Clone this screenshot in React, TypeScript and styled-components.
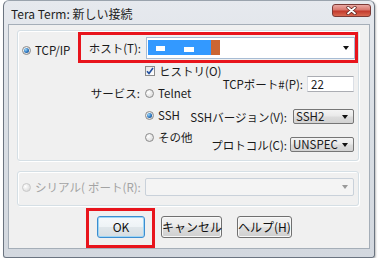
import React from "react";
import styled, { createGlobalStyle } from "styled-components";

const GlobalStyle = createGlobalStyle`
  body {
    margin: 0;
    background: #ffffff;
    font-family: "Noto Sans CJK JP", "Noto Sans", sans-serif;
    color: #1a1a1a;
  }
`;

const Window = styled.div`
  box-sizing: border-box;
  width: 372px;
  height: 258px;
  margin-left: 3px;
  border: 1px solid #6b7480;
  border-top-color: #9aa3ad;
  border-radius: 6px 6px 3px 3px;
  background: linear-gradient(180deg, #e6e9ee 0%, #dadfe5 45%, #d3d8df 100%);
  padding: 0 4px 8px;
  box-shadow: 1px 1px 2px rgba(0, 0, 0, 0.25);
`;

const TitleBar = styled.div`
  display: flex;
  align-items: flex-start;
  height: 23px;
  margin: 0 -4px;
  padding: 0 3px 0 7px;
`;

const TitleText = styled.span`
  margin-top: 5px;
  font-size: 12px;
  line-height: 15px;
  color: #1e1e1e;
  white-space: nowrap;
`;

const CloseButton = styled.div`
  box-sizing: border-box;
  display: flex;
  align-items: center;
  justify-content: center;
  width: 39px;
  height: 13px;
  margin: 3px 0 0 auto;
  border: 1px solid #7c3a36;
  border-radius: 3px;
  background: linear-gradient(180deg, #eaa9a3 0%, #d9776d 45%, #c2392c 55%, #d86a52 100%);
`;

const Client = styled.div`
  box-sizing: border-box;
  display: flex;
  flex-direction: column;
  height: 225px;
  border: 1px solid #a5aeb8;
  background: #f0f0f0;
  padding: 5px 10px 0 8px;
  font-size: 11.5px;
  line-height: 14px;
`;

const Group = styled.div<{ $h: number; $mt?: number }>`
  box-sizing: border-box;
  height: ${({ $h }) => $h}px;
  margin-top: ${({ $mt = 0 }) => $mt}px;
  border: 1px solid #d5dfe5;
  border-radius: 3px;
  box-shadow: inset 1px 1px 0 #ffffff, 1px 1px 0 #ffffff;
  display: flex;
  flex-direction: column;
`;

const HostRow = styled.div`
  display: flex;
  align-items: flex-start;
  margin-top: 1px;
`;

const SideOption = styled.label<{ $w: number; $mt?: number }>`
  display: flex;
  align-items: center;
  gap: 4px;
  flex-shrink: 0;
  width: ${({ $w }) => $w}px;
  margin-top: ${({ $mt = 0 }) => $mt}px;
  padding-left: 4px;
  box-sizing: border-box;
  white-space: nowrap;
`;

const ClippedText = styled.span`
  display: block;
  width: 51px;
  overflow: hidden;
  white-space: nowrap;
  color: #a3a3a3;
`;

const HighlightFrame = styled.div`
  box-sizing: border-box;
  display: flex;
  align-items: center;
  gap: 5px;
  width: 281px;
  height: 31px;
  border: 3px solid #e8141c;
`;

const FieldLabel = styled.span<{ $w?: number; $disabled?: boolean; $ml?: number }>`
  ${({ $w }) => ($w ? `width: ${$w}px;` : "")}
  margin-left: ${({ $ml = 0 }) => $ml}px;
  text-align: right;
  white-space: nowrap;
  color: ${({ $disabled }) => ($disabled ? "#a3a3a3" : "#1a1a1a")};
`;

const HostCombo = styled.div`
  box-sizing: border-box;
  display: flex;
  align-items: center;
  width: 209px;
  height: 22px;
  padding: 0 5px 0 1px;
  border: 1px solid #a7bcd4;
  background: #ffffff;
`;

const Selection = styled.div`
  display: flex;
  align-items: center;
  height: 15px;
  width: 63px;
  background: #3399ff;
`;

const Redact = styled.span<{ $w: number; $ml: number; $dy: number }>`
  width: ${({ $w }) => $w}px;
  height: 5px;
  margin-left: ${({ $ml }) => $ml}px;
  margin-top: ${({ $dy }) => $dy}px;
  background: #ffffff;
`;

const CaretBlock = styled.div`
  width: 9px;
  height: 15px;
  background: #cc6633;
`;

const Arrow = styled.span<{ $disabled?: boolean }>`
  margin-left: auto;
  width: 0;
  height: 0;
  border-left: 3.5px solid transparent;
  border-right: 3.5px solid transparent;
  border-top: 4px solid ${({ $disabled }) => ($disabled ? "#9a9a9a" : "#111111")};
`;

const OptionsArea = styled.div`
  display: flex;
  margin-top: -3px;
  padding: 0 4px 0 62px;
`;

const LeftGrid = styled.div`
  display: grid;
  flex-shrink: 0;
  grid-template-columns: 60px 45px;
  grid-auto-rows: 22px;
  column-gap: 5px;
  align-items: center;
`;

const Option = styled.label`
  display: flex;
  align-items: center;
  gap: 4px;
  white-space: nowrap;
`;

const Radio = styled.span<{ $checked?: boolean; $disabled?: boolean }>`
  position: relative;
  box-sizing: border-box;
  flex-shrink: 0;
  width: 9px;
  height: 9px;
  border-radius: 50%;
  border: 1px solid ${({ $disabled }) => ($disabled ? "#c9c9c9" : "#8b8b8b")};
  background: radial-gradient(circle at 35% 35%, #ffffff 0%, #e4e4e4 60%, #cfcfcf 100%);

  &::after {
    content: "";
    display: ${({ $checked }) => ($checked ? "block" : "none")};
    position: absolute;
    inset: 1px;
    border-radius: 50%;
    background: radial-gradient(circle at 35% 35%, #9fd8f7 0%, #2a75c0 55%, #16407a 100%);
  }
`;

const CheckBox = styled.span`
  box-sizing: border-box;
  display: flex;
  align-items: center;
  justify-content: center;
  flex-shrink: 0;
  width: 10px;
  height: 10px;
  border: 1px solid #8b8b8b;
  background: linear-gradient(135deg, #e6e6e6, #ffffff);
`;

const RightCol = styled.div`
  display: flex;
  flex-direction: column;
  align-items: flex-end;
  margin-left: auto;
  padding-top: 16px;
`;

const FieldRow = styled.div<{ $gap: number; $mt?: number }>`
  display: flex;
  align-items: center;
  gap: ${({ $gap }) => $gap}px;
  margin-top: ${({ $mt = 0 }) => $mt}px;
`;

const PortInput = styled.div`
  box-sizing: border-box;
  width: 47px;
  height: 16px;
  padding-left: 3px;
  border: 1px solid #abadb3;
  border-left-color: #dbdfe6;
  border-right-color: #dbdfe6;
  background: #ffffff;
  line-height: 14px;
`;

const ButtonCombo = styled.div<{ $w: number }>`
  box-sizing: border-box;
  display: flex;
  align-items: center;
  width: ${({ $w }) => $w}px;
  height: 15px;
  padding: 0 5px 0 2px;
  border: 1px solid #767676;
  border-radius: 2px;
  background: linear-gradient(180deg, #f4f4f4 0%, #e9e9e9 48%, #dcdcdc 52%, #d2d2d2 100%);
  line-height: 13px;
  white-space: nowrap;
`;

const SerialRow = styled.div`
  display: flex;
  align-items: center;
  height: 100%;
  padding: 0 4px 2px 0;
  box-sizing: border-box;
`;

const DisabledCombo = styled.div`
  box-sizing: border-box;
  display: flex;
  align-items: center;
  width: 209px;
  height: 18px;
  margin-left: auto;
  padding-right: 5px;
  border: 1px solid #c9d1da;
  border-radius: 2px;
  background: #f4f4f4;
`;

const ButtonRow = styled.div`
  display: flex;
  align-items: flex-start;
  margin-top: 2px;
  padding-left: 69px;
`;

const OkFrame = styled.div`
  box-sizing: border-box;
  width: 69px;
  height: 40px;
  padding: 5px 0 0 8px;
  border: 3px solid #e8141c;
`;

const Button = styled.button<{ $w: number; $primary?: boolean; $ml?: number; $mt?: number }>`
  box-sizing: border-box;
  width: ${({ $w }) => $w}px;
  height: 22px;
  margin: ${({ $mt = 0 }) => $mt}px 0 0 ${({ $ml = 0 }) => $ml}px;
  padding: 0;
  font-family: inherit;
  font-size: 12px;
  line-height: 14px;
  color: #111111;
  border: 1px solid ${({ $primary }) => ($primary ? "#3c8dd0" : "#707070")};
  border-radius: 3px;
  background: ${({ $primary }) =>
    $primary
      ? "linear-gradient(180deg, #f6f9fb 0%, #eef3f6 48%, #dfe6ea 52%, #d6dde2 100%)"
      : "linear-gradient(180deg, #f2f2f2 0%, #ebebeb 48%, #dddddd 52%, #cfcfcf 100%)"};
  box-shadow: ${({ $primary }) => ($primary ? "inset 0 0 0 1px #9fd6f5" : "inset 0 0 0 1px #f8f8f8")};
  white-space: nowrap;
`;

const CloseGlyph = () => (
  <svg width="11" height="9" viewBox="0 0 11 9">
    <path d="M2 1.5 L9 7.5 M9 1.5 L2 7.5" stroke="#5a1f1b" strokeWidth="3.2" strokeLinecap="round" />
    <path d="M2 1.5 L9 7.5 M9 1.5 L2 7.5" stroke="#ffffff" strokeWidth="1.8" strokeLinecap="round" />
  </svg>
);

const CheckMark = () => (
  <svg width="8" height="8" viewBox="0 0 8 8">
    <path d="M1 4.2 L3 6.5 L7 1" fill="none" stroke="#1f4fa0" strokeWidth="1.6" />
  </svg>
);

export default function App() {
  return (
    <>
      <GlobalStyle />
      <Window>
        <TitleBar>
          <TitleText>Tera Term: 新しい接続</TitleText>
          <CloseButton>
            <CloseGlyph />
          </CloseButton>
        </TitleBar>
        <Client>
          <Group $h={134}>
            <HostRow>
              <SideOption $w={60} $mt={11}>
                <Radio $checked />
                <span>TCP/IP</span>
              </SideOption>
              <HighlightFrame>
                <FieldLabel $w={60}>ホスト(T):</FieldLabel>
                <HostCombo>
                  <Selection>
                    <Redact $w={9} $ml={8} $dy={2} />
                    <Redact $w={10} $ml={19} $dy={4} />
                  </Selection>
                  <CaretBlock />
                  <Arrow />
                </HostCombo>
              </HighlightFrame>
            </HostRow>
            <OptionsArea>
              <LeftGrid>
                <span />
                <Option>
                  <CheckBox>
                    <CheckMark />
                  </CheckBox>
                  <span>ヒストリ(O)</span>
                </Option>
                <FieldLabel>サービス:</FieldLabel>
                <Option>
                  <Radio />
                  <span>Telnet</span>
                </Option>
                <span />
                <Option>
                  <Radio $checked />
                  <span>SSH</span>
                </Option>
                <span />
                <Option>
                  <Radio />
                  <span>その他</span>
                </Option>
              </LeftGrid>
              <RightCol>
                <FieldRow $gap={4}>
                  <FieldLabel>TCPポート#(P):</FieldLabel>
                  <PortInput>22</PortInput>
                </FieldRow>
                <FieldRow $gap={6} $mt={17}>
                  <FieldLabel>SSHバージョン(V):</FieldLabel>
                  <ButtonCombo $w={61}>
                    SSH2
                    <Arrow />
                  </ButtonCombo>
                </FieldRow>
                <FieldRow $gap={3} $mt={13}>
                  <FieldLabel>プロトコル(C):</FieldLabel>
                  <ButtonCombo $w={64}>
                    UNSPEC
                    <Arrow />
                  </ButtonCombo>
                </FieldRow>
              </RightCol>
            </OptionsArea>
          </Group>
          <Group $h={36} $mt={10}>
            <SerialRow>
              <SideOption $w={67}>
                <Radio $disabled />
                <ClippedText>シリアル(E)</ClippedText>
              </SideOption>
              <FieldLabel $disabled $ml={3}>
                ポート(R):
              </FieldLabel>
              <DisabledCombo>
                <Arrow $disabled />
              </DisabledCombo>
            </SerialRow>
          </Group>
          <ButtonRow>
            <OkFrame>
              <Button $w={48} $primary>
                OK
              </Button>
            </OkFrame>
            <Button $w={61} $ml={6} $mt={8}>
              キャンセル
            </Button>
            <Button $w={55} $ml={15} $mt={8}>
              ヘルプ(H)
            </Button>
          </ButtonRow>
        </Client>
      </Window>
    </>
  );
}
